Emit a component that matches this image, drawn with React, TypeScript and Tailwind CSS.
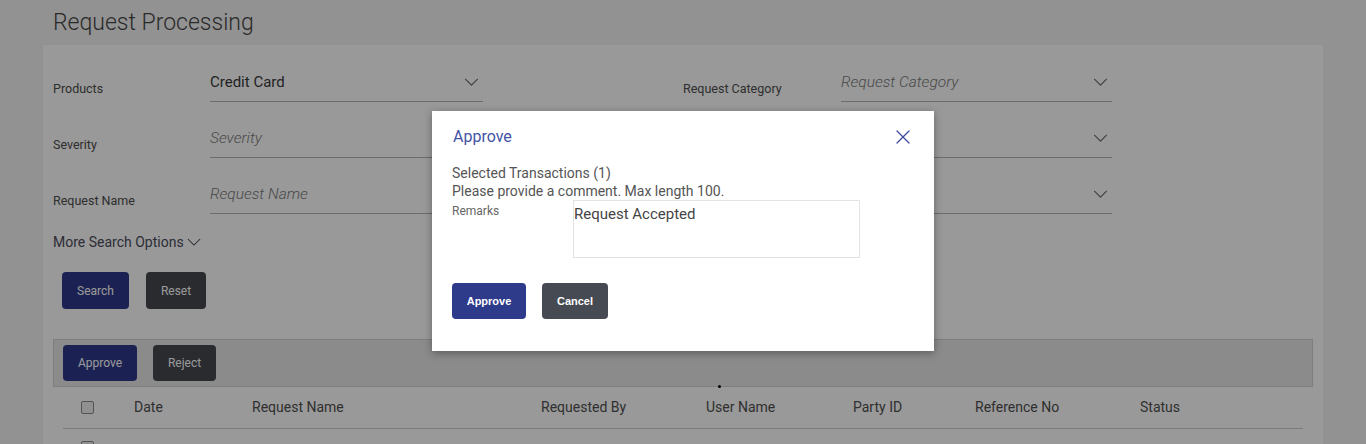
import { X } from "lucide-react";

const font = { fontFamily: "Roboto, 'Noto Sans', sans-serif" };

function Chevron({ className = "" }: { className?: string }) {
  return (
    <svg viewBox="0 0 16 10" className={className} fill="none" stroke="currentColor" strokeWidth="1.2">
      <path d="M1 1l7 7 7-7" />
    </svg>
  );
}

type Field = { label: string; value?: string; placeholder?: string };

const leftFields: Field[] = [
  { label: "Products", value: "Credit Card" },
  { label: "Severity", placeholder: "Severity" },
  { label: "Request Name", placeholder: "Request Name" },
];

const rightFields: Field[] = [
  { label: "Request Category", placeholder: "Request Category" },
  { label: "Status", placeholder: "Status" },
  { label: "Request Type", placeholder: "Request Type" },
];

function FieldRow({ field, labelW, selectW }: { field: Field; labelW: string; selectW: string }) {
  return (
    <div className="flex items-start h-[32px]">
      <div className={`${labelW} pt-[11px] text-[12.5px] leading-[16px] text-[#4d4d4d]`}>{field.label}</div>
      <div className={`${selectW} h-[32px] border-b border-[#b5b5b5] flex items-start justify-between pt-[2px]`}>
        {field.value ? (
          <span className="text-[15px] leading-[20px] text-[#3a3a3a]">{field.value}</span>
        ) : (
          <span className="text-[15.5px] leading-[20px] italic font-light text-[#7a7a7a]">{field.placeholder}</span>
        )}
        <Chevron className="w-[15px] h-[9px] mt-[6px] mr-[4px] text-[#6b6b6b]" />
      </div>
    </div>
  );
}

const columns = ["Date", "Request Name", "Requested By", "User Name", "Party ID", "Reference No", "Status"];

export default function App() {
  return (
    <div className="relative w-full h-[444px] overflow-hidden bg-[#f4f4f4]" style={font}>
      {/* Page */}
      <div className="h-[45px] pl-[53px] pt-[8px] text-[23px] leading-[30px] font-light text-[#474747]">
        Request Processing
      </div>
      <div className="mx-[43px] bg-white pt-[25px] pl-[10px] h-[420px]">
        <div className="flex">
          <div className="flex flex-col gap-[24px]">
            {leftFields.map((f) => (
              <FieldRow key={f.label} field={f} labelW="w-[157px]" selectW="w-[273px]" />
            ))}
          </div>
          <div className="flex flex-col gap-[24px] ml-[200px]">
            {rightFields.map((f) => (
              <FieldRow key={f.label} field={f} labelW="w-[158px]" selectW="w-[271px]" />
            ))}
          </div>
        </div>

        <div className="mt-[18px] flex items-center gap-[3px] text-[14px] leading-[20px] text-[#4a4d5c]">
          More Search Options
          <Chevron className="w-[14px] h-[9px] text-[#4a4d5c]" />
        </div>

        <div className="mt-[20px] ml-[9px] flex gap-[17px]">
          <button className="w-[67px] h-[37px] rounded-[4px] bg-[#2e3a8a] text-white text-[12px]">Search</button>
          <button className="w-[60px] h-[37px] rounded-[4px] bg-[#45484f] text-white text-[12px]">Reset</button>
        </div>

        <div className="mt-[30px] mr-[10px] h-[48px] bg-[#e8e8e8] border border-[#d3d3d3] flex items-center pl-[9px] gap-[16px]">
          <button className="w-[74px] h-[36px] rounded-[4px] bg-[#2e3a8a] text-white text-[12px]">Approve</button>
          <button className="w-[63px] h-[36px] rounded-[4px] bg-[#45484f] text-white text-[12px]">Reject</button>
        </div>

        <div className="ml-[10px] mr-[20px]">
          <div className="grid grid-cols-[71px_118px_289px_165px_147px_122px_165px_1fr] items-center h-[42px] border-b border-[#cfcfcf] text-[14px] text-[#4f4f4f]">
            <div className="pl-[18px]">
              <div className="w-[13px] h-[13px] rounded-[2px] border border-[#8a8a8a] bg-[#f0f0f0]" />
            </div>
            {columns.map((c) => (
              <div key={c}>{c}</div>
            ))}
          </div>
          <div className="grid grid-cols-[71px_118px_289px_165px_147px_122px_165px_1fr] items-start pt-[12px] text-[14px] text-[#4f4f4f]">
            <div className="pl-[18px]">
              <div className="w-[13px] h-[13px] rounded-[2px] border border-[#8a8a8a] bg-[#f0f0f0]" />
            </div>
            <div>15 Jan 2019</div>
            <div>Card Limit Update</div>
            <div>William</div>
            <div>johndoe</div>
            <div>001234</div>
            <div>REF12345</div>
            <div>Initiated</div>
          </div>
        </div>
      </div>

      {/* Overlay */}
      <div className="absolute inset-0 bg-black/40" />
      <div className="absolute left-[718px] top-[385px] w-[3px] h-[3px] rounded-full bg-black" />

      {/* Modal */}
      <div className="absolute left-[432px] top-[111px] w-[502px] h-[240px] bg-white shadow-[0_2px_8px_rgba(0,0,0,0.35)] pl-[20px] pr-[20px]">
        <div className="flex items-start justify-between pt-[16px]">
          <div className="pl-[1px] text-[16px] leading-[20px] text-[#4453a3]">Approve</div>
          <X className="w-[24px] h-[24px] text-[#3d4a9c] -mt-[2px] -mr-[1px]" strokeWidth={1.2} />
        </div>
        <div className="mt-[15px] text-[14px] leading-[18px] text-[#555]">
          <div>Selected Transactions (1)</div>
          <div>Please provide a comment. Max length 100.</div>
        </div>
        <div className="flex items-start -mt-[8px]">
          <div className="w-[121px] pt-[12px] text-[12px] leading-[14px] text-[#666]">Remarks</div>
          <div className="mt-[8px] w-[287px] h-[58px] border border-[#e3e3e3] pt-[4px] text-[15px] leading-[18px] text-[#444]">
            Request Accepted
          </div>
        </div>
        <div className="mt-[25px] flex gap-[16px]" style={{ fontFamily: "'Liberation Sans', Arial, sans-serif" }}>
          <button className="w-[74px] h-[36px] rounded-[4px] bg-[#2e3a8a] text-white text-[11px] font-bold">Approve</button>
          <button className="w-[66px] h-[36px] rounded-[4px] bg-[#464a52] text-white text-[11px] font-bold">Cancel</button>
        </div>
      </div>
    </div>
  );
}
